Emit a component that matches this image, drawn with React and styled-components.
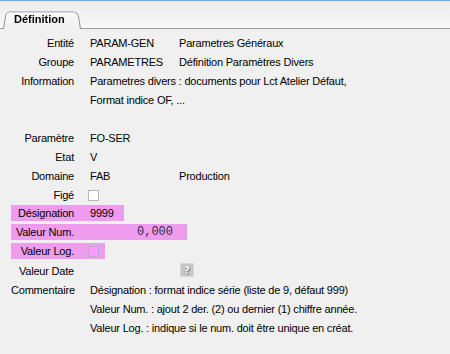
import React from 'react'
import styled, { createGlobalStyle, css } from 'styled-components'

const GlobalStyle = createGlobalStyle`
  html, body {
    margin: 0;
    padding: 0;
    background: #f0f0f0;
  }
  body {
    font-family: 'Liberation Sans', Arial, sans-serif;
    font-size: 11px;
    letter-spacing: -0.2px;
    color: #000;
  }
`

const PINK = '#f09cee'

const Window = styled.div`
  width: 450px;
  height: 354px;
  overflow: hidden;
  background: #f0f0f0;
`

const TabStrip = styled.div`
  box-sizing: border-box;
  height: 29px;
  border-top: 1px solid #7aa7ea;
  border-bottom: 1px solid #a0a0a0;
  background: linear-gradient(#ececec, #f9f9f9);
  display: flex;
  align-items: flex-end;
  padding-left: 3px;
`

const Tab = styled.div`
  position: relative;
  z-index: 1;
  box-sizing: border-box;
  width: 78px;
  height: 19px;
  margin-bottom: -1px;
  padding: 2px 0 0 11px;
  font-weight: bold;
  letter-spacing: 0;
  line-height: 14px;
  isolation: isolate;

  &::before {
    content: '';
    position: absolute;
    inset: 0;
    z-index: -1;
    border: 1px solid #8f8f8f;
    border-bottom: none;
    border-radius: 5px 6px 0 0;
    background: linear-gradient(#fbfbfb, #f0f0f0);
    transform: perspective(30px) rotateX(7deg);
    transform-origin: bottom;
  }
`

const Form = styled.div`
  padding-top: 4px;
`

const Row = styled.div`
  display: flex;
  align-items: flex-start;
  height: 19px;
`

const Field = styled.div`
  display: flex;
  align-items: center;
  flex-shrink: 0;
  box-sizing: border-box;
  height: 19px;
  margin-left: 11px;
  ${(p) =>
    p.$hl &&
    css`
      width: ${p.$hl}px;
      height: 16px;
      margin-top: 1px;
      background: ${PINK};
    `}
`

const Label = styled.span`
  flex-shrink: 0;
  width: 63px;
  margin-right: 16px;
  text-align: right;
  white-space: nowrap;
`

const Value = styled.span`
  width: 89px;
  white-space: nowrap;
  ${(p) =>
    p.$wide &&
    css`
      width: auto;
    `}
`

const NumValue = styled.span`
  flex-shrink: 0;
  width: 83px;
  text-align: right;
  font-family: 'Liberation Mono', 'Courier New', monospace;
  font-size: 12px;
  letter-spacing: 0;
  color: #2b2b4a;
`

const Extra = styled.span`
  display: flex;
  align-items: center;
  height: 19px;
  white-space: nowrap;
`

const Check = styled.span`
  display: inline-block;
  box-sizing: border-box;
  width: 11px;
  height: 11px;
  margin-left: -2px;
  vertical-align: middle;
  border: 1px solid ${(p) => (p.$pink ? '#c9a2c9' : '#b8b8b8')};
  background: ${(p) => (p.$pink ? '#fd9bfd' : '#ffffff')};
`

const HelpButton = styled.span`
  display: flex;
  align-items: center;
  justify-content: center;
  box-sizing: border-box;
  width: 14px;
  height: 14px;
  margin: -1px 0 0 1px;
  background: #c6c6c6;
  border: 1px solid #d8d8d8;
  color: #ffffff;
  font-family: 'DejaVu Sans', sans-serif;
  font-weight: bold;
  font-size: 10px;
  letter-spacing: 0;
  text-shadow: 0 0 1px #666, 1px 1px 0 #888;
`

const rows = [
  { label: 'Entité', value: 'PARAM-GEN', extra: 'Parametres Généraux' },
  { label: 'Groupe', value: 'PARAMETRES', extra: 'Définition Paramètres Divers' },
  { label: 'Information', wide: 'Parametres divers : documents pour Lct Atelier Défaut,' },
  { label: '', wide: 'Format indice OF, ...' },
  { label: '' },
  { label: 'Paramètre', value: 'FO-SER' },
  { label: 'Etat', value: 'V' },
  { label: 'Domaine', value: 'FAB', extra: 'Production' },
  { label: 'Figé', check: true },
  { label: 'Désignation', value: '9999', hl: 113 },
  { label: 'Valeur Num.', num: '0,000', hl: 176 },
  { label: 'Valeur Log.', check: true, pink: true, hl: 94 },
  { label: 'Valeur Date', help: true },
  { label: 'Commentaire', wide: 'Désignation : format indice série (liste de 9, défaut 999)' },
  { label: '', wide: 'Valeur Num. : ajout 2 der. (2) ou dernier (1) chiffre année.' },
  { label: '', wide: 'Valeur Log. : indique si le num. doit être unique en créat.' },
]

const App = () => {
  return (
    <Window>
      <GlobalStyle />
      <TabStrip>
        <Tab>Définition</Tab>
      </TabStrip>
      <Form>
        {rows.map((r, i) => (
          <Row key={i}>
            <Field $hl={r.hl}>
              <Label>{r.label}</Label>
              {r.wide && <Value $wide>{r.wide}</Value>}
              {r.value && <Value>{r.value}</Value>}
              {r.num && <NumValue>{r.num}</NumValue>}
              {r.check && (
                <Value>
                  <Check $pink={r.pink} />
                </Value>
              )}
              {r.help && <Value />}
            </Field>
            {r.extra && <Extra>{r.extra}</Extra>}
            {r.help && (
              <Extra>
                <HelpButton>?</HelpButton>
              </Extra>
            )}
          </Row>
        ))}
      </Form>
    </Window>
  )
}

export default App
